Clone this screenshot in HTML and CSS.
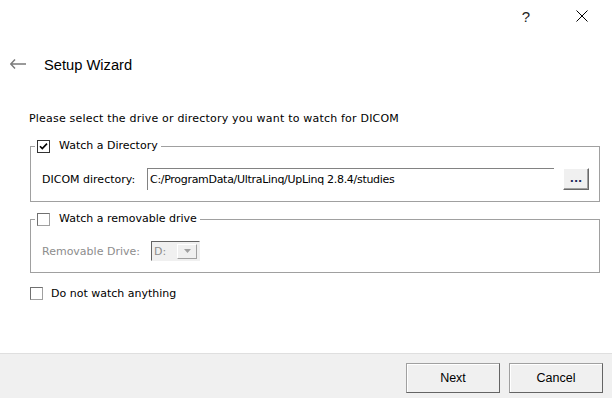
FILE: index.html
```html
<!DOCTYPE html>
<html lang="en">
<head>
  <meta charset="UTF-8" />
  <title>Setup Wizard</title>
  <link rel="stylesheet" href="styles.css">
</head>
<body>

<div class="dialog">
  <!-- title bar -->
  <div class="titlebar">
    <span class="help">?</span>
    <span class="close">
      <svg width="12" height="12" viewBox="0 0 12 12"><path d="M0.5 0.5 L11.5 11.5 M11.5 0.5 L0.5 11.5" stroke="#000" stroke-width="1" fill="none"/></svg>
    </span>
  </div>

  <!-- header -->
  <div class="header">
    <svg class="back" width="16" height="10" viewBox="0 0 16 10"><path d="M0.5 5 H16 M5 0.5 L0.7 5 L5 9.5" stroke="#7a7a7a" stroke-width="1.5" fill="none"/></svg>
    <h1>Setup Wizard</h1>
  </div>

  <div class="content">
    <p class="intro">Please select the drive or directory you want to watch for DICOM</p>

    <fieldset class="group">
      <legend>
        <label class="check">
          <span class="box">
            <svg width="11" height="11" viewBox="0 0 11 11"><path d="M2 5.2 L4.3 7.6 L9 2.6" stroke="#000" stroke-width="1.6" fill="none"/></svg>
          </span>
          Watch a Directory
        </label>
      </legend>
      <div class="row">
        <span class="label dir-label">DICOM directory:</span>
        <div class="path">C:/ProgramData/UltraLinq/UpLinq 2.8.4/studies</div>
        <button class="browse">...</button>
      </div>
    </fieldset>

    <fieldset class="group second">
      <legend>
        <label class="check">
          <span class="box"></span>
          Watch a removable drive
        </label>
      </legend>
      <div class="row disabled">
        <span class="label drive-label">Removable Drive:</span>
        <div class="combo">
          <span>D:</span>
          <span class="drop">
            <svg width="7" height="4" viewBox="0 0 7 4"><path d="M0 0 H7 L3.5 4 Z" fill="#a0a0a0"/></svg>
          </span>
        </div>
      </div>
    </fieldset>

    <label class="check single">
      <span class="box"></span>
      Do not watch anything
    </label>
  </div>

  <!-- buttons -->
  <div class="footer">
    <button class="btn">Next</button>
    <button class="btn">Cancel</button>
  </div>
</div>

</body>
</html>
```

FILE: styles.css
```css
body {
  margin: 0;
  padding: 0;
  background-color: #fff;
  font-family: 'DejaVu Sans', sans-serif;
  font-size: 11px;
  color: #000;
}

.dialog {
  width: 612px;
  height: 398px;
  display: flex;
  flex-direction: column;
  overflow: hidden;
}

.titlebar {
  height: 32px;
  display: flex;
  align-items: center;
  justify-content: flex-end;
  padding-right: 24px;
}

.help {
  font-family: 'Liberation Sans', sans-serif;
  font-size: 15px;
  margin-right: 46px;
  color: #222;
}

.close {
  display: flex;
}

.header {
  height: 30px;
  margin-top: 18px;
  display: flex;
  align-items: center;
  padding-left: 10px;
}

.back {
  margin-right: 18px;
  margin-top: -2px;
}

.header h1 {
  font-family: 'Liberation Sans', sans-serif;
  font-size: 14.7px;
  font-weight: normal;
  margin: 0;
  color: #000;
}

.content {
  flex: 1;
  padding: 32px 12px 0 30px;
}

.intro {
  margin: 0 0 0 -1px;
  line-height: 14px;
  letter-spacing: 0.2px;
}

.group {
  margin: 13px 0 0 0;
  padding: 0 10px 11px 4px;
  border: 1px solid #a0a0a0;
  min-width: 0;
}

.group.second {
  margin-top: 10px;
}

.group legend {
  padding: 0 3px 0 2px;
  line-height: 14px;
}

.check {
  display: flex;
  align-items: center;
  height: 14px;
}

.box {
  width: 11px;
  height: 11px;
  border: 1px solid #333;
  background: #fff;
  margin-right: 9px;
  display: flex;
  align-items: center;
  justify-content: center;
}

.group.second .box,
.check.single .box {
  border-color: #a0a0a0;
  border-top-color: #707070;
  border-left-color: #707070;
}

.check.single {
  margin-top: 13px;
}

.check.single .box {
  margin-right: 8px;
}

.row {
  display: flex;
  align-items: center;
  margin-top: 15px;
  padding-left: 7px;
  height: 22px;
}

.row .label {
  flex: none;
}

.dir-label {
  width: 105px;
}

.drive-label {
  width: 109px;
}

.path {
  flex: 1;
  height: 21px;
  line-height: 21px;
  padding-left: 2px;
  border-top: 1px solid #828282;
  border-left: 1px solid #828282;
  white-space: nowrap;
  letter-spacing: -0.3px;
}

.browse {
  width: 26px;
  height: 22px;
  margin-left: 9px;
  padding: 0;
  background: #f0f0f0;
  border: 1px solid;
  border-color: #fff #696969 #696969 #fff;
  box-shadow: inset -1px -1px 0 #a0a0a0;
  font-family: 'DejaVu Sans', sans-serif;
  font-size: 11px;
  font-weight: bold;
  color: #1e2a5a;
  line-height: 14px;
}

.row.disabled {
  height: 20px;
}

.row.disabled .label {
  color: #8d8d8d;
}

.combo {
  width: 45px;
  height: 18px;
  background: #f0f0f0;
  border: 1px solid;
  border-color: #646464 #f0f0f0 #f0f0f0 #646464;
  display: flex;
  align-items: center;
  justify-content: space-between;
  color: #8d8d8d;
  padding-left: 2px;
  box-sizing: content-box;
}

.combo .drop {
  width: 18px;
  height: 13px;
  margin-right: 2px;
  border: 1px solid;
  border-color: #fff #a0a0a0 #a0a0a0 #fff;
  display: flex;
  align-items: center;
  justify-content: center;
}

.footer {
  height: 45px;
  border-top: 1px solid #dfdfdf;
  background-color: #f0f0f0;
  display: flex;
  justify-content: flex-end;
  gap: 9px;
  padding: 9px 9px 0 0;
  box-sizing: border-box;
}

.btn {
  width: 94px;
  height: 30px;
  background: #f0f0f0;
  border: 1px solid;
  border-color: #a0a0a0 #646464 #646464 #a0a0a0;
  box-shadow: inset 1px 1px 0 #fff;
  font-family: 'Liberation Sans', sans-serif;
  font-size: 12.5px;
  color: #000;
  padding: 0;
}
```
